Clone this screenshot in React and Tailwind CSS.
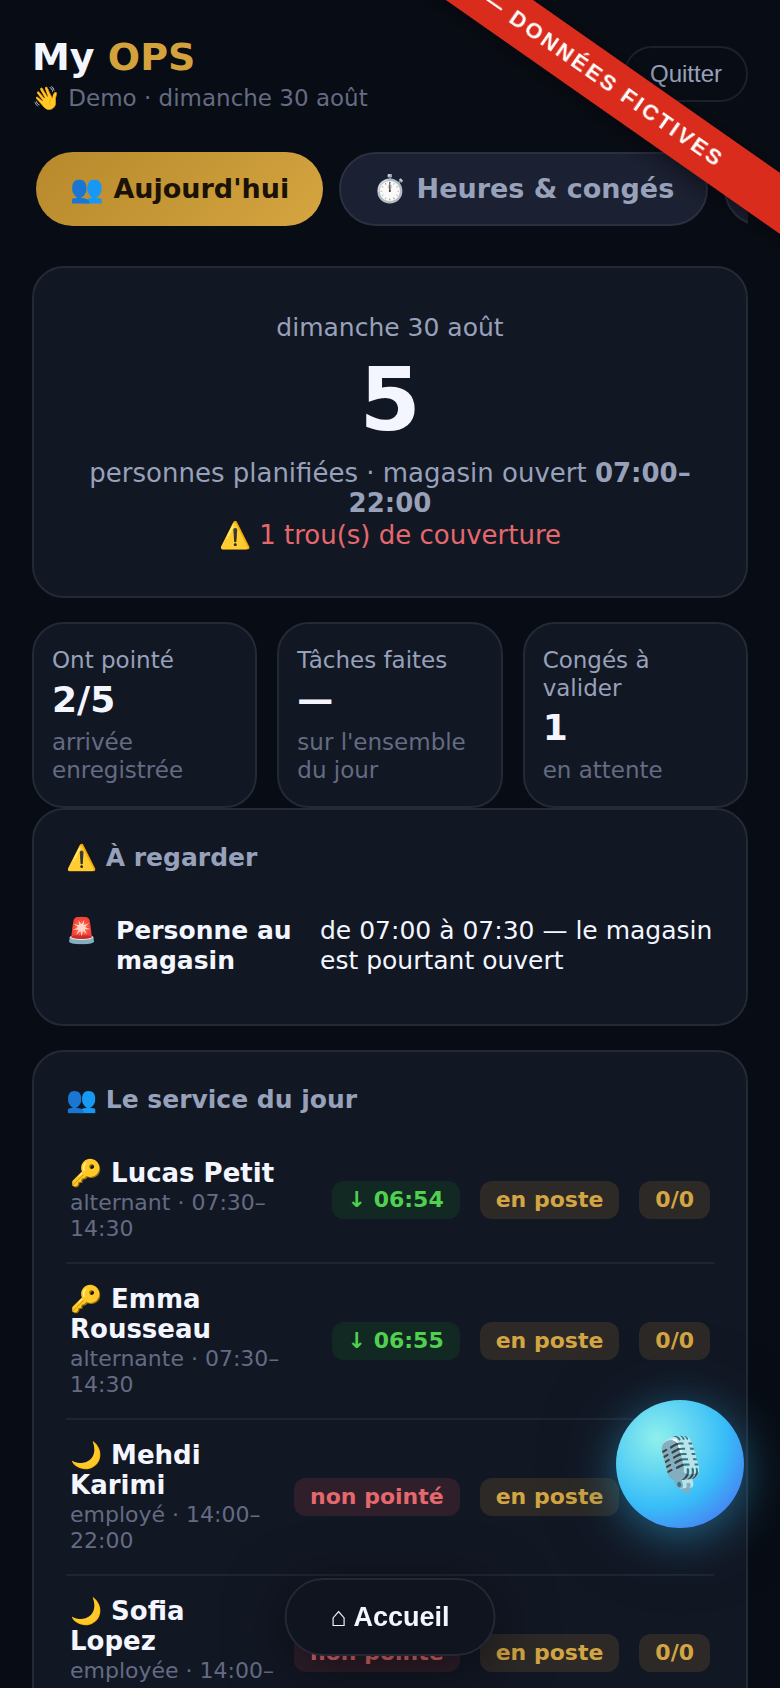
import { useState } from 'react'
import clsx from 'clsx'

const TABS = [
  { id: 'today', label: "👥 Aujourd'hui" },
  { id: 'hours', label: '⏱️ Heures & congés' },
  { id: 'tasks', label: '✅ Tâches' },
]

const STATS = [
  { label: 'Ont pointé', value: '2/5', hint: 'arrivée enregistrée' },
  { label: 'Tâches faites', value: '—', hint: "sur l'ensemble du jour" },
  { label: 'Congés à valider', value: '1', hint: 'en attente' },
]

const TEAM = [
  { icon: '🔑', name: 'Lucas Petit', role: 'alternant', hours: '07:30–14:30', clockIn: '06:54' },
  { icon: '🔑', name: 'Emma Rousseau', role: 'alternante', hours: '07:30–14:30', clockIn: '06:55' },
  { icon: '🌙', name: 'Mehdi Karimi', role: 'employé', hours: '14:00–22:00', clockIn: null },
  { icon: '🌙', name: 'Sofia Lopez', role: 'employée', hours: '14:00–22:00', clockIn: null },
]

function Card({ className, children }) {
  return (
    <section className={clsx('rounded-[32px] border-2 border-[#242935] bg-[#121724]', className)}>
      {children}
    </section>
  )
}

function CardTitle({ children }) {
  return <h2 className="mb-[22px] text-[25px] leading-8 font-bold text-[#98a1ba]">{children}</h2>
}

function Pill({ tone, children }) {
  return (
    <span
      className={clsx(
        'inline-block rounded-xl px-4 py-1.5 text-[22px] leading-[26px] font-bold whitespace-nowrap',
        tone === 'green' && 'bg-[#122822] text-[#4fd04f]',
        tone === 'red' && 'bg-[#2e1f2b] text-[#e5686c]',
        tone === 'gold' && 'bg-[#2c2927] text-[#d4a543]'
      )}
    >
      {children}
    </span>
  )
}

function Header() {
  return (
    <header className="flex items-start justify-between">
      <div>
        <h1 className="text-[38px] leading-[42px] font-bold">
          My <span className="text-[#d4a23d]">OPS</span>
        </h1>
        <p className="mt-1 text-[23px] leading-8 text-[#646b82]">👋 Demo · dimanche 30 août</p>
      </div>
      <button className="mt-2.5 rounded-full border-2 border-[#1d212b] px-6 py-3 font-['Liberation_Sans',sans-serif] text-2xl leading-7 text-[#98a1ba]">
        Quitter
      </button>
    </header>
  )
}

function TeamRow({ person }) {
  return (
    <tr className="border-b-2 border-[#202532]">
      <td className="py-5 pl-1">
        <div className="pr-1.5 text-[26px] leading-[30px] font-bold">{person.icon} {person.name}</div>
        <div className="mt-0.5 text-[22px] leading-[26px] text-[#646b82]">{person.role} · {person.hours}</div>
      </td>
      <td className="pl-3 text-right">
        {person.clockIn ? <Pill tone="green">↓ {person.clockIn}</Pill> : <Pill tone="red">non pointé</Pill>}
      </td>
      <td className="w-px pl-5"><Pill tone="gold">en poste</Pill></td>
      <td className="w-px pr-1 pl-5"><Pill tone="gold">0/0</Pill></td>
    </tr>
  )
}

export default function App() {
  const [tab, setTab] = useState('today')

  return (
    <div className="h-screen overflow-x-hidden overflow-y-auto bg-[#080c14] font-['DejaVu_Sans',sans-serif] text-[#f4f6ff] [scrollbar-width:none]">
      <main className="px-8 pt-9 pb-40">
        <Header />

        <nav className="mt-[38px] flex gap-4 overflow-hidden pl-1">
          {TABS.map(t => (
            <button
              key={t.id}
              onClick={() => setTab(t.id)}
              className={clsx(
                'shrink-0 rounded-full border-2 px-8 py-5 text-[27px] leading-[30px] font-bold whitespace-nowrap',
                tab === t.id
                  ? 'border-transparent bg-linear-135 from-[#b8892b] to-[#d4a540] bg-origin-border text-[#1a1206]'
                  : 'border-[#2b3040] bg-[#1b2032] text-[#98a1ba]'
              )}
            >
              {t.label}
            </button>
          ))}
        </nav>

        <Card className="mt-10 px-11 py-11 text-center text-[26px] leading-[30px] text-[#98a1ba]">
          <p className="text-[25px] leading-8">dimanche 30 août</p>
          <p className="mt-3 text-[88px] leading-[88px] font-bold text-[#f4f6ff]">5</p>
          <p className="mt-3.5">
            personnes planifiées · magasin ouvert <b>07:00–22:00</b>
          </p>
          <p className="leading-[34px] text-[#e5686c]">⚠️ 1 trou(s) de couverture</p>
        </Card>

        <div className="mt-6 grid grid-cols-3 gap-5">
          {STATS.map(s => (
            <Card key={s.label} className="px-[18px] py-[22px] text-[23px] leading-7">
              <p className="text-[#98a1ba]">{s.label}</p>
              <p className="mt-1 text-4xl leading-11 font-bold">{s.value}</p>
              <p className="mt-1.5 text-[#646b82]">{s.hint}</p>
            </Card>
          ))}
        </div>

        <Card className="p-8">
          <CardTitle>⚠️ À regarder</CardTitle>
          <div className="flex gap-5 pt-5 pb-4 text-[25px] leading-[30px]">
            <span className="w-[30px] shrink-0">🚨</span>
            <b className="w-[184px] shrink-0">Personne au magasin</b>
            <span>de 07:00 à 07:30 — le magasin est pourtant ouvert</span>
          </div>
        </Card>

        <Card className="mt-6 p-8">
          <CardTitle>👥 Le service du jour</CardTitle>
          <table className="w-full border-collapse">
            <tbody>
              {TEAM.map(person => (
                <TeamRow key={person.name} person={person} />
              ))}
            </tbody>
          </table>
        </Card>
      </main>

      <button className="fixed bottom-8 left-1/2 -translate-x-1/2 rounded-full border-2 border-[#232834] bg-[#10141f] px-11 py-[22px] font-['Liberation_Sans',sans-serif] text-[27px] leading-[30px] font-bold whitespace-nowrap shadow-[0_12px_60px_rgba(0,0,0,0.5)]">
        ⌂ Accueil
      </button>

      <button
        aria-label="Micro"
        className="fixed right-9 bottom-40 flex size-32 items-center justify-center rounded-full bg-[radial-gradient(circle_at_32%_30%,#8ff0ec,#38bdf8_55%,#4f5cf0)] text-[52px] leading-none shadow-[0_8px_48px_rgba(56,189,248,0.5),0_4px_80px_rgba(0,0,0,0.4)]"
      >
        🎙️
      </button>

      <div className="fixed top-[30px] -right-27 w-[640px] rotate-35 bg-[#da2c1c] py-3 text-center font-['Liberation_Sans',sans-serif] text-[22px] leading-[26px] font-bold tracking-[0.12em] text-white shadow-[0_4px_24px_rgba(0,0,0,0.5)]">
        DÉMO — DONNÉES FICTIVES
      </div>
    </div>
  )
}
